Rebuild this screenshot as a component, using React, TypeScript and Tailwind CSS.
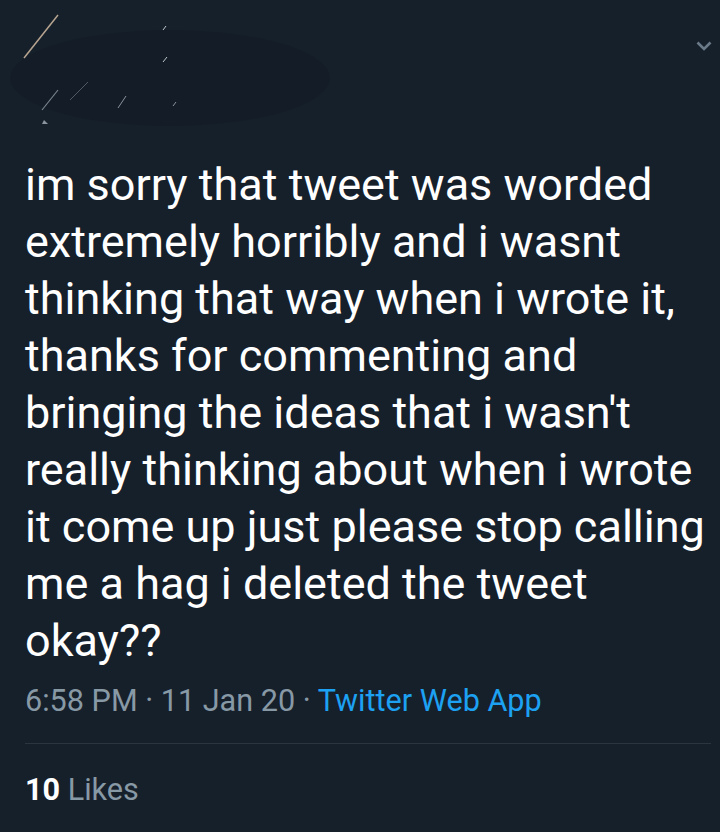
import React from 'react';

const lines = [
  'im sorry that tweet was worded',
  'extremely horribly and i wasnt',
  'thinking that way when i wrote it,',
  'thanks for commenting and',
  "bringing the ideas that i wasn't",
  'really thinking about when i wrote',
  'it come up just please stop calling',
  'me a hag i deleted the tweet',
  'okay??',
];

const App = () => {
  return (
    <div
      className="w-[720px] h-[832px] bg-[#16202b] overflow-hidden"
      style={{ fontFamily: 'Roboto, "Liberation Sans", sans-serif' }}
    >
      {/* header: scribbled-out name */}
      <div className="h-[150px] flex justify-between items-start">
        <svg width="400" height="140" viewBox="0 0 400 140">
          <ellipse cx="170" cy="78" rx="160" ry="48" fill="#141d27" />
          <path d="M24 58 L58 15" stroke="#b8a590" strokeWidth="1.5" />
          <path d="M42 110 L58 90" stroke="#7a8590" strokeWidth="1.2" />
          <path d="M70 100 L88 82" stroke="#4e5964" strokeWidth="1" />
          <path d="M118 108 L126 96" stroke="#8a949e" strokeWidth="1" />
          <path d="M163 30 L166 26" stroke="#c0c6cc" strokeWidth="1" />
          <path d="M163 62 L167 57" stroke="#c0c6cc" strokeWidth="1" />
          <path d="M173 106 L176 102" stroke="#8a949e" strokeWidth="1" />
          <path d="M44 120 L48 124 L42 124 Z" fill="#8a949e" />
        </svg>
        <svg className="mt-[38px] mr-[8px]" width="16" height="16" viewBox="0 0 16 16">
          <path d="M1.5 4.5 L8 11 L14.5 4.5" stroke="#6b7a88" strokeWidth="2.6" fill="none" />
        </svg>
      </div>

      <div className="pl-[25px] pr-[9px]">
        <div className="text-white text-[45px] leading-[57px] mt-[6px]">
          {lines.map((l) => (
            <div key={l} className="whitespace-nowrap">{l}</div>
          ))}
        </div>

        <div className="mt-[12px] text-[30.6px] leading-[40px] text-[#8899a6]">
          6:58 PM · 11 Jan 20 · <span className="text-[#1da1f2]">Twitter Web App</span>
        </div>

        <div className="mt-[22px] border-t border-[#2a3540]" />

        <div className="mt-[26px] text-[30.6px] leading-[40px] text-[#8899a6]">
          <span className="text-white font-bold">10</span> Likes
        </div>
      </div>
    </div>
  );
};

export default App;
